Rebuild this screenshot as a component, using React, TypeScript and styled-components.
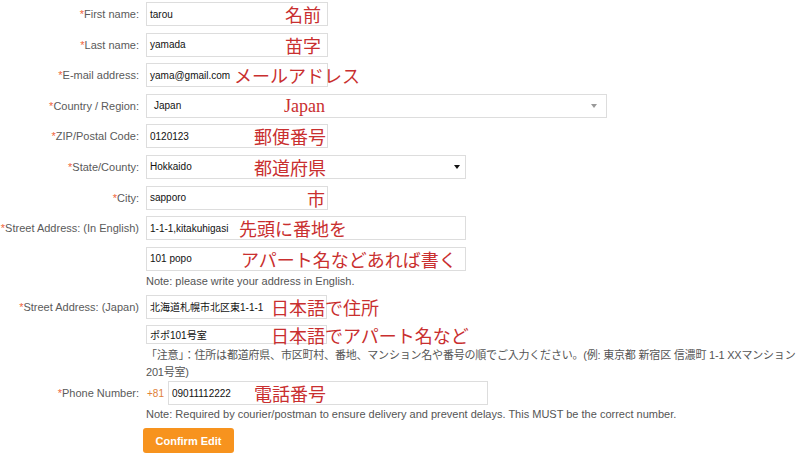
import styled, { createGlobalStyle } from "styled-components";

const GlobalStyle = createGlobalStyle`
  html, body {
    margin: 0;
    padding: 0;
    background: #fff;
  }
  body {
    font-family: "Liberation Sans", Arial, "Noto Sans CJK JP", sans-serif;
    font-size: 11px;
    color: #555;
  }
`;

const Form = styled.form`
  display: flex;
  flex-direction: column;
  padding-top: 2px;
  width: 800px;
`;

const Row = styled.div<{ $mt?: number }>`
  display: grid;
  grid-template-columns: 139px 1fr;
  column-gap: 7px;
  margin-top: ${(p) => (p.$mt ?? 0)}px;
`;

const Label = styled.label`
  text-align: right;
  line-height: 24px;
  height: 24px;
  white-space: nowrap;
  color: #5a5a5a;
`;

const Star = styled.span`
  color: #f0643c;
`;

const Stack = styled.div`
  display: flex;
  flex-direction: column;
  gap: 6.6px;
`;

const Field = styled.div<{ $w: number; $h?: number }>`
  position: relative;
  box-sizing: border-box;
  width: ${(p) => p.$w}px;
  height: ${(p) => p.$h ?? 24}px;
  border: 1px solid #ddd;
  background: #fff;
  display: flex;
  align-items: center;
  padding-left: ${(p) => (p.$w > 400 ? 7 : 3)}px;
  color: #111;
  font-size: 10px;
  white-space: nowrap;
`;

const Arrow = styled.span<{ $grey?: boolean }>`
  position: absolute;
  right: ${(p) => (p.$grey ? 9 : 5)}px;
  top: 50%;
  transform: translateY(-50%);
  width: 0;
  height: 0;
  border-left: 3.5px solid transparent;
  border-right: 3.5px solid transparent;
  border-top: 4px solid ${(p) => (p.$grey ? "#999" : "#111")};
`;

const Note = styled.span<{ $left: number; $serif?: boolean }>`
  position: absolute;
  left: ${(p) => p.$left}px;
  top: 50%;
  transform: translateY(-52%);
  color: #c92f2f;
  font-family: ${(p) =>
    p.$serif
      ? '"Liberation Serif", "Times New Roman", serif'
      : '"Noto Sans CJK JP", "Noto Sans", sans-serif'};
  font-size: 18px;
  font-weight: 400;
  line-height: 1;
  white-space: nowrap;
  pointer-events: none;
`;

const Help = styled.p<{ $mt?: number; $tight?: boolean }>`
  margin: ${(p) => p.$mt ?? 0}px 0 0 146px;
  color: #555;
  font-size: 11px;
  line-height: 17px;
  letter-spacing: ${(p) => (p.$tight ? "-0.2px" : "normal")};
  font-family: "Liberation Sans", Arial, "Noto Sans CJK JP", sans-serif;
`;

const Phone = styled.div`
  display: flex;
  align-items: center;
  gap: 4px;
`;

const Code = styled.span`
  color: #e0803a;
  margin-left: 1px;
  font-size: 10px;
`;

const ConfirmButton = styled.button`
  margin: 5px 0 0 143px;
  width: 91px;
  height: 25px;
  border: none;
  border-radius: 3px;
  background: #f7931e;
  color: #fff;
  font-family: "Liberation Sans", Arial, sans-serif;
  font-size: 11px;
  font-weight: 700;
  cursor: pointer;
`;

type Item = {
  label: string;
  value: string;
  w: number;
  note: string;
  left: number;
  serif?: boolean;
  select?: "grey" | "black";
};

const basics: Item[] = [
  { label: "First name:", value: "tarou", w: 182, note: "名前", left: 138 },
  { label: "Last name:", value: "yamada", w: 182, note: "苗字", left: 138 },
  { label: "E-mail address:", value: "yama@gmail.com", w: 182, note: "メールアドレス", left: 87 },
  { label: "Country / Region:", value: "Japan", w: 461, note: "Japan", left: 137, serif: true, select: "grey" },
  { label: "ZIP/Postal Code:", value: "0120123", w: 182, note: "郵便番号", left: 107 },
  { label: "State/County:", value: "Hokkaido", w: 320, note: "都道府県", left: 107, select: "black" },
  { label: "City:", value: "sapporo", w: 182, note: "市", left: 160 },
];

const App = () => {
  return (
    <>
      <GlobalStyle />
      <Form onSubmit={(e) => e.preventDefault()}>
        <Stack>
          {basics.map((it) => (
            <Row key={it.label}>
              <Label>
                <Star>*</Star>
                {it.label}
              </Label>
              <Field $w={it.w}>
                {it.value}
                {it.select && <Arrow $grey={it.select === "grey"} />}
                <Note $left={it.left} $serif={it.serif}>
                  {it.note}
                </Note>
              </Field>
            </Row>
          ))}
          <Row>
            <Label>
              <Star>*</Star>Street Address: (In English)
            </Label>
            <Stack>
              <Field $w={320}>
                1-1-1,kitakuhigasi
                <Note $left={92}>先頭に番地を</Note>
              </Field>
              <Field $w={320}>
                101 popo
                <Note $left={94}>アパート名などあれば書く</Note>
              </Field>
            </Stack>
          </Row>
        </Stack>
        <Help $mt={2}>Note: please write your address in English.</Help>
        <Row $mt={5}>
          <Label>
            <Star>*</Star>Street Address: (Japan)
          </Label>
          <Stack>
            <Field $w={181}>
              北海道札幌市北区東1-1-1
              <Note $left={124}>日本語で住所</Note>
            </Field>
            <Field $w={181} $h={19}>
              ポポ101号室
              <Note $left={124}>日本語でアパート名など</Note>
            </Field>
          </Stack>
        </Row>
        <Help $mt={3} $tight>
          「注意」：住所は都道府県、市区町村、番地、マンション名や番号の順でご入力ください。(例: 東京都 新宿区 信濃町 1-1 XXマンション 201号室)
        </Help>
        <Row>
          <Label>
            <Star>*</Star>Phone Number:
          </Label>
          <Phone>
            <Code>+81</Code>
            <Field $w={320}>
              09011112222
              <Note $left={85}>電話番号</Note>
            </Field>
          </Phone>
        </Row>
        <Help $mt={1}>
          Note: Required by courier/postman to ensure delivery and prevent delays. This MUST be the correct number.
        </Help>
        <div>
          <ConfirmButton type="submit">Confirm Edit</ConfirmButton>
        </div>
      </Form>
    </>
  );
};

export default App;
